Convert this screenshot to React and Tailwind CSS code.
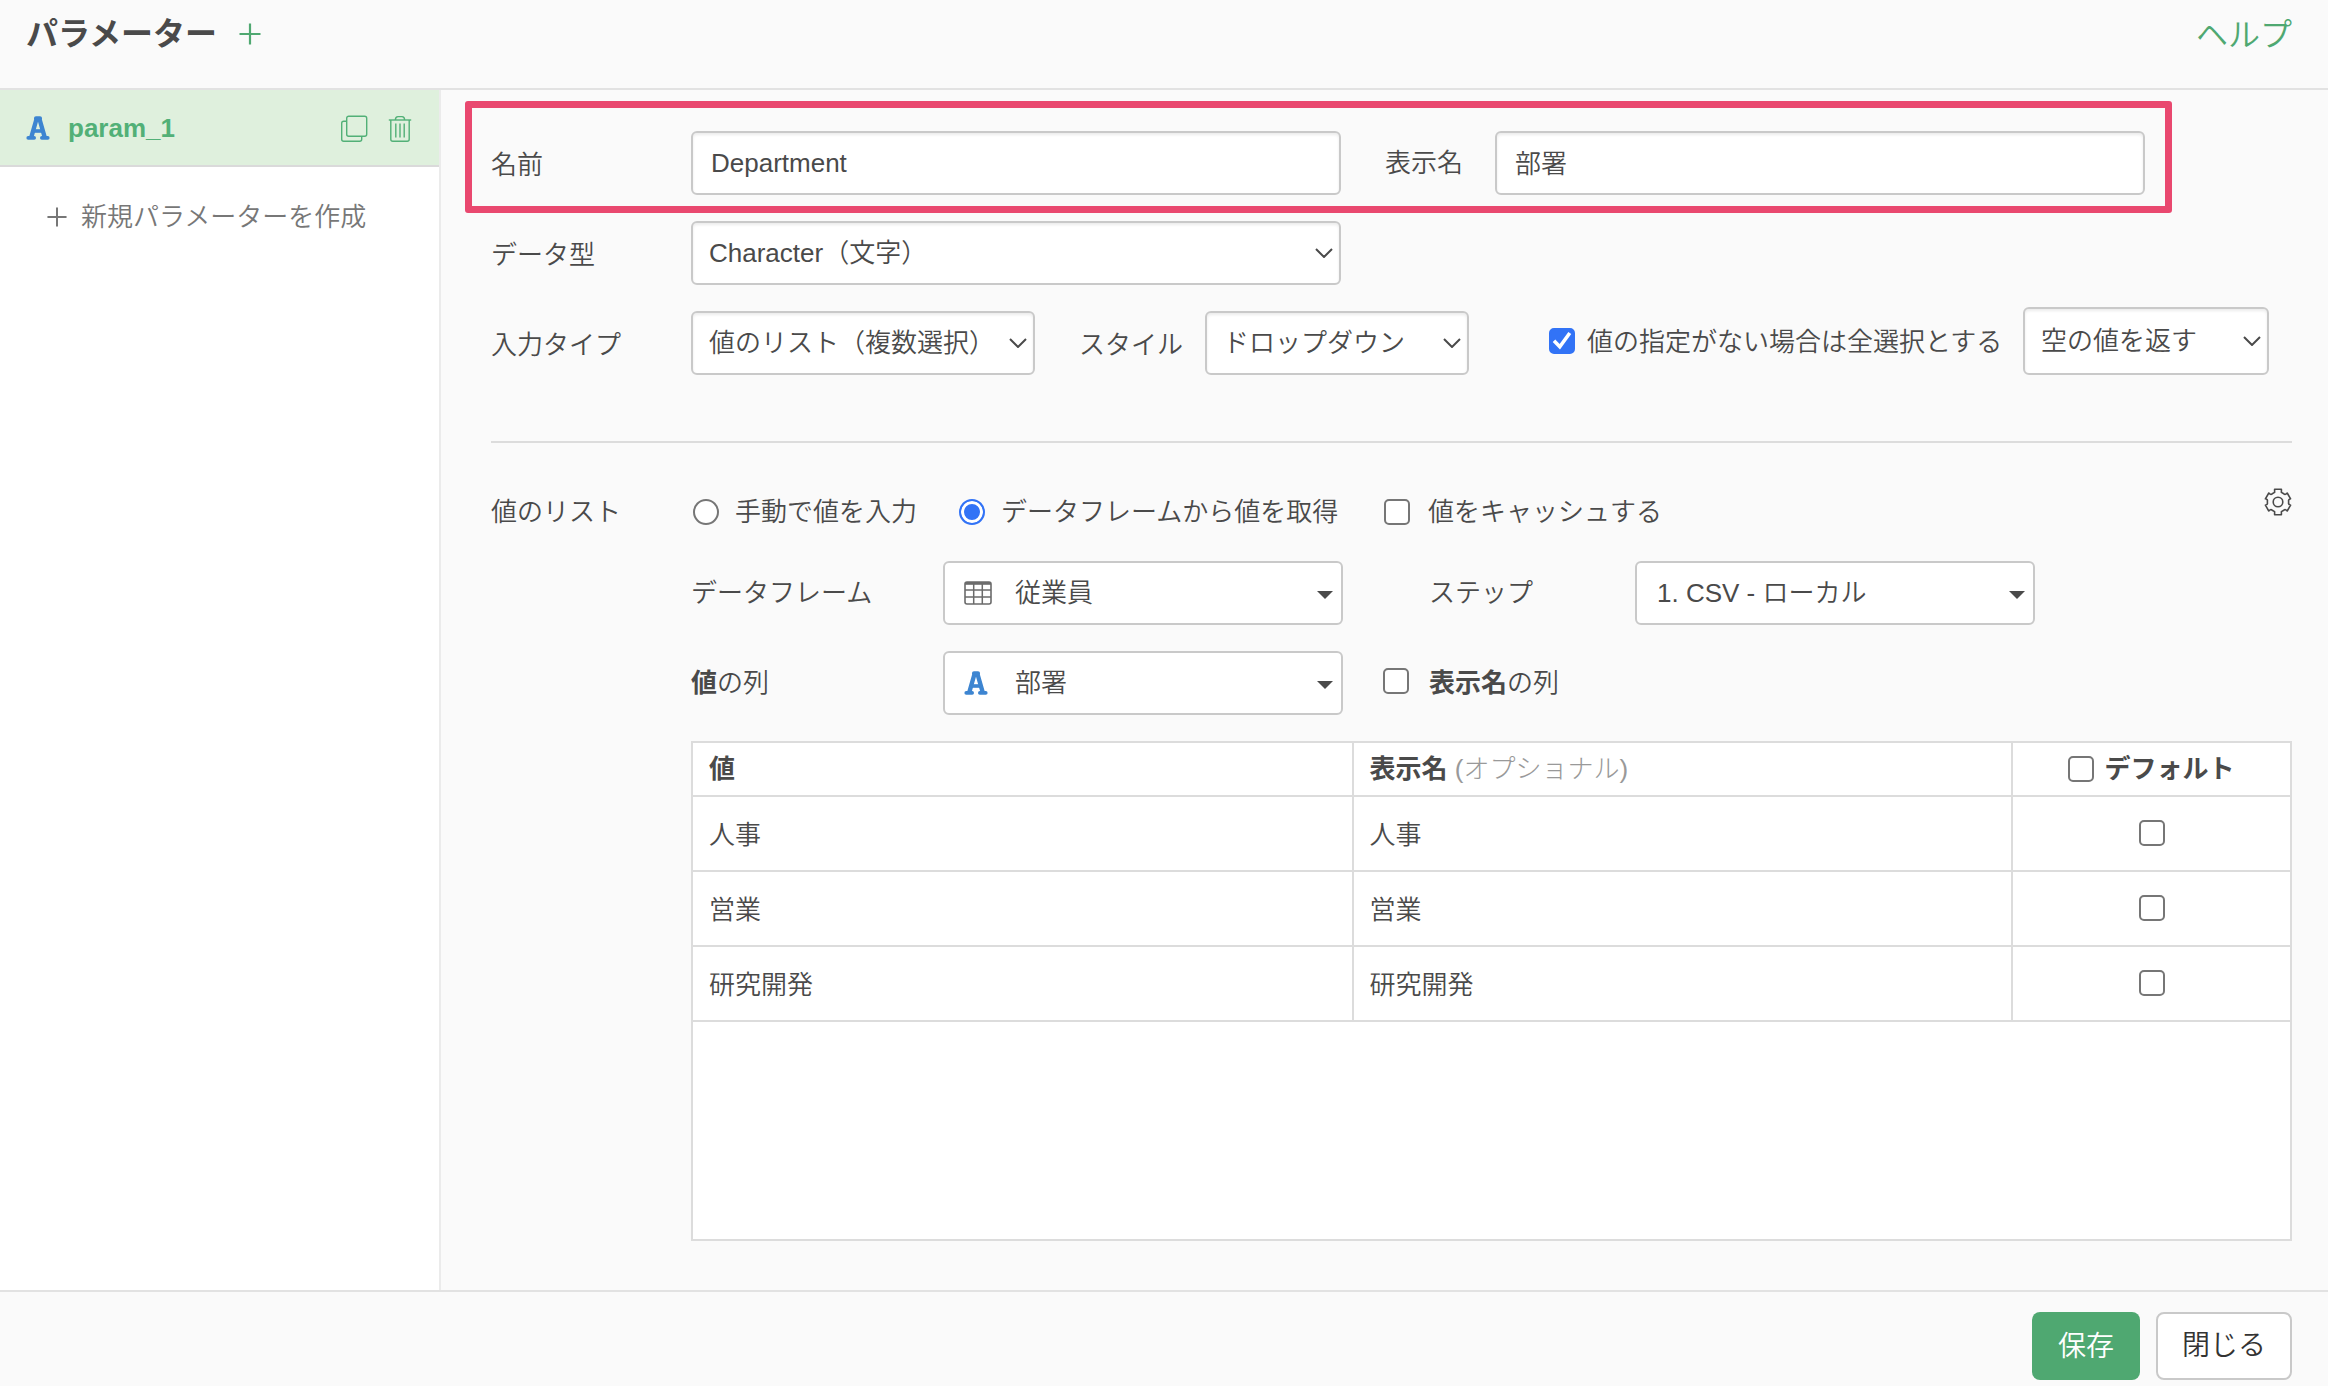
import { useId } from "react";

const fieldBase =
  "rounded-md border-2 border-[#c9c9c9] bg-white text-[26px] text-[#4a4a4a] outline-none";
const insetShadow = "shadow-[inset_0_2px_3px_rgba(0,0,0,0.08)]";

function LetterA({ className }) {
  return (
    <svg viewBox="0 0 24 24" className={className} fill="none" stroke="#3d85d1" aria-hidden="true">
      <path d="M10.8 2 5.2 21.6M13.2 2l5.6 19.600" strokeWidth="4.4" />
      <path d="M10 2.200h4" strokeWidth="4" strokeLinecap="round" />
      <path d="M7 15h10" strokeWidth="3.6" />
      <path d="M2.200 21.900h6M15.800 21.900h6" strokeWidth="3.6" strokeLinecap="round" />
    </svg>
  );
}

function PlusIcon({ className }) {
  return (
    <svg viewBox="0 0 22 22" className={className} stroke="currentColor" fill="none" aria-hidden="true">
      <path d="M11 .5v21M.5 11h21" strokeWidth="2.2" />
    </svg>
  );
}

function CopyIcon() {
  return (
    <svg viewBox="0 0 28 28" className="h-7 w-7" stroke="currentColor" fill="none" strokeWidth="1.4" aria-hidden="true">
      <rect x="6.7" y="1.2" width="20" height="20" rx="2" />
      <path d="M6.7 6.2H3.7a2 2 0 0 0-2 2v16a2 2 0 0 0 2 2h16a2 2 0 0 0 2-2v-3" />
    </svg>
  );
}

function TrashIcon() {
  return (
    <svg viewBox="0 0 24 28" className="h-7 w-6" stroke="currentColor" fill="none" strokeWidth="1.4" aria-hidden="true">
      <path d="M.8 5h22.4" />
      <path d="M7.4 5c0-2.2 1-3.4 2.6-3.4h4c1.6 0 2.6 1.2 2.6 3.4" />
      <path d="M2.8 5v19.2a2 2 0 0 0 2 2h14.4a2 2 0 0 0 2-2V5" />
      <path d="M7.8 8.5v14M12 8.5v14M16.2 8.5v14" />
    </svg>
  );
}

function GridIcon({ className }) {
  return (
    <svg viewBox="0 0 28 24" className={className} stroke="#6b6b6b" fill="none" aria-hidden="true">
      <rect x="1" y="1" width="26" height="22" rx="2" strokeWidth="1.6" />
      <path d="M1 2.4h26" strokeWidth="2.8" />
      <path d="M1 9h26M1 16h26M9.7 2v21M18.3 2v21" strokeWidth="1.5" />
    </svg>
  );
}

function GearIcon() {
  return (
    <svg viewBox="0 0 28 28" className="h-7 w-7" stroke="currentColor" fill="none" strokeWidth="1.6" strokeLinejoin="round" aria-hidden="true">
      <path d="M10.6 1.200h6.800v3.200l2.400 1.400q1.600 1.400 3.400-.8l3.400 5.800q-2.400.6-2 2.200v2q-.4 1.600 2 2.200l-3.400 5.800q-1.800-2.200-3.400-.8l-2.400 1.400v3.200h-6.800v-3.200l-2.400-1.400q-1.600-1.400-3.400.8l-3.400-5.800q2.400-.6 2-2.200v-2q.4-1.600-2-2.200L4.800 5q1.800 2.200 3.400.8l2.400-1.400z" />
      <circle cx="14" cy="14" r="4.8" />
    </svg>
  );
}

function Chevron() {
  return (
    <svg viewBox="0 0 18 10" className="pointer-events-none absolute right-2 top-1/2 h-[10px] w-[18px] -translate-y-1/2" stroke="#4a4a4a" fill="none" strokeWidth="2" aria-hidden="true">
      <path d="M1 1l8 8 8-8" />
    </svg>
  );
}

function Caret() {
  return (
    <svg viewBox="0 0 16 8" className="pointer-events-none absolute right-[10px] top-[30px] h-2 w-4" fill="#4a4a4a" aria-hidden="true">
      <path d="M0 0h16L8 8z" />
    </svg>
  );
}

function Select({ id, label, value, width, height = "h-16" }) {
  return (
    <div className={`relative shrink-0 ${width}`}>
      <select
        id={id}
        aria-label={label}
        defaultValue={value}
        className={`${fieldBase} ${insetShadow} ${height} w-full appearance-none pl-4 pr-8`}
      >
        <option>{value}</option>
      </select>
      <Chevron />
    </div>
  );
}

function Picker({ id, value, icon }) {
  return (
    <div className="relative w-[400px] shrink-0">
      <select
        id={id}
        defaultValue={value}
        className={`${fieldBase} h-16 w-full appearance-none pr-9 ${icon ? "pl-[70px]" : "pl-5"}`}
      >
        <option>{value}</option>
      </select>
      {icon}
      <Caret />
    </div>
  );
}

function Check({ id, checked, label, className = "" }) {
  return (
    <span className={`relative inline-flex h-[26px] w-[26px] shrink-0 ${className}`}>
      <input
        id={id}
        type="checkbox"
        aria-label={label}
        defaultChecked={checked}
        className="peer h-[26px] w-[26px] appearance-none rounded-[5px] border-2 border-[#767676] bg-white checked:border-[#3273f6] checked:bg-[#3273f6]"
      />
      <svg viewBox="0 0 26 26" className="pointer-events-none absolute inset-0 hidden h-[26px] w-[26px] peer-checked:block" stroke="#fff" fill="none" strokeWidth="3.6" aria-hidden="true">
        <path d="M5 12.800l5.800 6L20.800 5" />
      </svg>
    </span>
  );
}

function Radio({ id, checked }) {
  return (
    <input
      id={id}
      name="source"
      type="radio"
      defaultChecked={checked}
      className="h-[26px] w-[26px] shrink-0 appearance-none rounded-full border-2 border-[#767676] bg-white checked:border-[#3273f6] checked:bg-[#3273f6] checked:shadow-[inset_0_0_0_3px_#fff]"
    />
  );
}

const rows = ["人事", "営業", "研究開発"];

export default function App() {
  const uid = useId();
  const id = (name) => `${uid}-${name}`;

  return (
    <div className="flex min-h-screen flex-col bg-[#fafafa] font-['Liberation_Sans','Noto_Sans_CJK_JP',sans-serif] text-[26px] leading-[38px] font-[350] text-[#4a4a4a]" lang="ja">
      <header className="flex h-[90px] shrink-0 items-start justify-between border-b-2 border-[#e2e2e2] pl-[26px] pr-9 pt-[10px]">
        <div className="flex items-center gap-[22px]">
          <h1 className="text-[32px] leading-[48px] font-bold">パラメーター</h1>
          <button type="button" aria-label="追加" className="text-[#4fa871]">
            <PlusIcon className="h-[22px] w-[22px]" />
          </button>
        </div>
        <a href="#help" className="text-[32px] leading-[50px] text-[#4fa871]">ヘルプ</a>
      </header>

      <div className="flex flex-1">
        <aside className="w-[441px] shrink-0 border-r-2 border-[#ebebeb] bg-white">
          <div className="flex h-[77px] items-center border-b-2 border-[#dadada] bg-[#dff0dd] pl-[26px] pr-[27px] text-[#52b077]">
            <LetterA className="h-6 w-6" />
            <a href="#param_1" className="ml-[18px] font-bold">param_1</a>
            <button type="button" aria-label="複製" className="ml-auto pt-[2px]">
              <CopyIcon />
            </button>
            <button type="button" aria-label="削除" className="ml-5 pt-[2px]">
              <TrashIcon />
            </button>
          </div>
          <button type="button" className="mt-[31px] ml-[47px] flex items-center gap-[14px] text-[#777]">
            <PlusIcon className="h-5 w-5" />
            新規パラメーターを作成
          </button>
        </aside>

        <main className="flex min-w-0 flex-1 flex-col pt-[11px] pr-9 pb-[49px] pl-6">
          <div className="flex w-fit items-center rounded-[3px] border-7 border-[#e9486f] pt-[23px] pr-5 pb-[11px] pl-[19px]">
            <label htmlFor={id("name")} className="w-[200px] pt-1">名前</label>
            <input id={id("name")} defaultValue="Department" className={`${fieldBase} ${insetShadow} h-16 w-[650px] px-[18px]`} />
            <label htmlFor={id("display")} className="ml-11 w-[110px]">表示名</label>
            <input id={id("display")} defaultValue="部署" className={`${fieldBase} ${insetShadow} h-16 w-[650px] px-[18px] pb-1`} />
          </div>

          <div className="flex flex-1 flex-col pt-2 pl-[26px]">
            <div className="flex items-center">
              <label htmlFor={id("type")} className="w-[200px] pt-1">データ型</label>
              <Select id={id("type")} value="Character（文字）" width="w-[650px]" />
            </div>

            <div className="mt-[22px] flex items-center">
              <div className="flex items-center self-end">
                <label htmlFor={id("input")} className="w-[200px] pt-1">入力タイプ</label>
                <Select id={id("input")} value="値のリスト（複数選択）" width="w-[344px]" />
                <label htmlFor={id("style")} className="ml-11 w-[126px] pt-1">スタイル</label>
                <Select id={id("style")} value="ドロップダウン" width="w-[264px]" />
              </div>
              <Check id={id("all")} checked className="ml-20" />
              <label htmlFor={id("all")} className="ml-3 w-[436px] pt-[2px] whitespace-nowrap">値の指定がない場合は全選択とする</label>
              <Select label="未指定時の値" value="空の値を返す" width="w-[246px]" height="h-[68px]" />
            </div>

            <hr className="mt-[66px] border-t-2 border-[#dcdcdc]" />

            <div className="mt-[50px] flex items-center">
              <span className="w-[202px]">値のリスト</span>
              <Radio id={id("manual")} />
              <label htmlFor={id("manual")} className="ml-4 w-[224px]">手動で値を入力</label>
              <Radio id={id("frame")} checked />
              <label htmlFor={id("frame")} className="ml-4 w-[383px]">データフレームから値を取得</label>
              <Check id={id("cache")} />
              <label htmlFor={id("cache")} className="ml-[18px]">値をキャッシュする</label>
              <button type="button" aria-label="設定" className="ml-auto -mt-5">
                <GearIcon />
              </button>
            </div>

            <div className="mt-[30px] flex items-center pl-[200px]">
              <label htmlFor={id("df")} className="w-[252px]">データフレーム</label>
              <Picker
                id={id("df")}
                value="従業員"
                icon={<GridIcon className="pointer-events-none absolute left-[21px] top-5 h-6 w-7" />}
              />
              <label htmlFor={id("step")} className="ml-[86px] w-[206px]">ステップ</label>
              <Picker id={id("step")} value="1. CSV - ローカル" />
            </div>

            <div className="mt-[26px] flex items-center pl-[200px]">
              <label htmlFor={id("col")} className="w-[252px]">
                <b className="font-bold">値</b>の列
              </label>
              <Picker
                id={id("col")}
                value="部署"
                icon={<LetterA className="pointer-events-none absolute left-[21px] top-5 h-6 w-6" />}
              />
              <Check id={id("labelcol")} className="mb-1 ml-10" />
              <label htmlFor={id("labelcol")} className="ml-5">
                <b className="font-bold">表示名</b>の列
              </label>
            </div>

            <div className="mt-[26px] ml-[200px] flex-1 border-2 border-[#dcdcdc] bg-white">
              <table className="w-full table-fixed border-collapse">
                <thead>
                  <tr className="h-[53px] border-b-2 border-[#dcdcdc] text-left">
                    <th className="border-r-2 border-[#dcdcdc] pl-4 font-bold">値</th>
                    <th className="border-r-2 border-[#dcdcdc] pl-4 font-bold">
                      表示名 <span className="font-light text-[#999]">(オプショナル)</span>
                    </th>
                    <th className="w-[278px]">
                      <span className="flex items-center justify-center gap-[10px]">
                        <Check id={id("default")} />
                        <label htmlFor={id("default")} className="font-bold">デフォルト</label>
                      </span>
                    </th>
                  </tr>
                </thead>
                <tbody>
                  {rows.map((value) => (
                    <tr key={value} className="h-[75px] border-b-2 border-[#dcdcdc]">
                      <td className="border-r-2 border-[#dcdcdc] pt-[2px] pl-4">{value}</td>
                      <td className="border-r-2 border-[#dcdcdc] pt-[2px] pl-4">{value}</td>
                      <td className="pb-[2px]">
                        <span className="flex justify-center">
                          <Check label={`${value}をデフォルトにする`} />
                        </span>
                      </td>
                    </tr>
                  ))}
                </tbody>
              </table>
            </div>
          </div>
        </main>
      </div>

      <footer className="flex h-24 shrink-0 justify-end gap-4 border-t-2 border-[#e2e2e2] pt-5 pr-9 text-[28px]">
        <button type="button" className="h-[68px] w-[108px] rounded-lg bg-[#4fa871] pt-[2px] text-white">保存</button>
        <button type="button" className="h-[68px] w-[136px] rounded-lg border-2 border-[#c9c9c9] bg-white text-[#333]">閉じる</button>
      </footer>
    </div>
  );
}
